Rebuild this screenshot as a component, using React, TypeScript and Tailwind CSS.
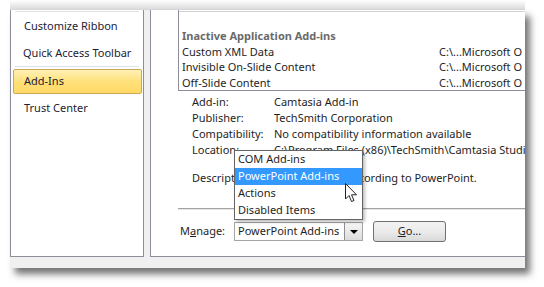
import React from "react";

const font = "font-['Noto_Sans',sans-serif]";

function Cursor() {
  return (
    <svg width="13" height="20" viewBox="0 0 13 20" className="absolute left-[345px] top-[183px]">
      <path d="M0.5 0.5 L0.5 16 L4 12.5 L6.5 18.5 L9 17.5 L6.5 11.8 L11.5 11.8 Z" fill="white" stroke="#222" strokeWidth="1" strokeLinejoin="miter" />
    </svg>
  );
}

export default function App() {
  return (
    <div className={`w-[544px] h-[287px] bg-white relative overflow-hidden text-[11px] text-[#1e1e1e] ${font}`}>
      <div className="ml-[10px] w-[515px] h-[10px] bg-gradient-to-b from-white to-[#d9d9d9]" />
      <div className="ml-[10px] w-[515px] h-[258px] bg-[#f0f0f0] shadow-[5px_6px_7px_rgba(0,0,0,0.55)] flex flex-col overflow-hidden">
        <div className="flex h-[247px] gap-[6px]">
          {/* left nav */}
          <div className="w-[134px] shrink-0 bg-white border-l border-r border-b border-[#8c8e9a] flex flex-col text-[#231c33]">
            <div className="mt-[1px] mx-[4px] h-px bg-[#dfe2e7]" />
            <div className="h-[28px] flex items-center pl-[13px]">Customize Ribbon</div>
            <div className="h-[26px] flex items-center pl-[12px]">Quick Access Toolbar</div>
            <div className="mx-[4px] h-px bg-[#dfe2e7]" />
            <div className="mt-[2px] ml-[2px] w-[129px] h-[25px] rounded-[2px] border border-[#c9a955] bg-gradient-to-b from-[#fff0b5] via-[#ffe17a] to-[#ffd966] flex items-center pl-[10px]">Add-Ins</div>
            <div className="h-[28px] flex items-center pl-[13px]">Trust Center</div>
          </div>
          {/* right */}
          <div className="flex-1 bg-white border-l border-b border-[#8c8e9a] flex flex-col overflow-hidden">
            <div className="ml-[27px] h-[81px] border-l border-b border-[#8c8e9a] flex flex-col overflow-hidden">
              <div className="mt-px h-px bg-[#d4d4d4]" />
              <div className="pt-[16px] pl-[3px] leading-[15.5px]">
                <div className="font-bold text-[#6a6a6a] h-[15.5px]">Inactive Application Add-ins</div>
                {["Custom XML Data", "Invisible On-Slide Content", "Off-Slide Content"].map((t) => (
                  <div key={t} className="flex h-[15.5px] whitespace-nowrap">
                    <div className="w-[257px] shrink-0">{t}</div>
                    <div>C:\...Microsoft O</div>
                  </div>
                ))}
              </div>
            </div>
            <div className="mt-[3px] pl-[41px] flex flex-col whitespace-nowrap">
              {[
                ["Add-in:", "Camtasia Add-in"],
                ["Publisher:", "TechSmith Corporation"],
                ["Compatibility:", "No compatibility information available"],
                ["Location:", "C:\\Program Files (x86)\\TechSmith\\Camtasia Studio"],
              ].map(([a, b]) => (
                <div key={a} className="flex h-[16px] items-center">
                  <div className="w-[82px] shrink-0">{a}</div>
                  <div>{b}</div>
                </div>
              ))}
              <div className="mt-[12px] flex h-[16px] items-center">
                <div className="w-[82px] shrink-0">Description:</div>
                <div>Add Camtasia recording to PowerPoint.</div>
              </div>
            </div>
            <div className="mt-[22px] ml-[27px] h-px bg-[#a3a3a3]" />
            <div className="ml-[27px] h-px bg-[#e6e6e6]" />
            <div className="mt-[11px] h-[21px] flex items-center pl-[29px]">
              <div className="w-[54px]">M<span className="underline">a</span>nage:</div>
              <div className="w-[129px] h-[19px] border border-[#a5a5a5] flex items-center">
                <div className="flex-1 pl-[3px] whitespace-nowrap">PowerPoint Add-ins</div>
                <div className="w-[18px] h-[17px] border-l border-[#8f8f8f] bg-gradient-to-b from-[#f6f6f6] to-[#dcdcdc] flex items-center justify-center">
                  <div className="w-0 h-0 border-l-[4px] border-r-[4px] border-t-[4px] border-l-transparent border-r-transparent border-t-black" />
                </div>
              </div>
              <div className="ml-[10px] w-[73px] h-[21px] rounded-[3px] border border-[#707070] bg-gradient-to-b from-[#f2f2f2] via-[#ebebeb] to-[#d9d9d9] flex items-center justify-center">
                <span><span className="underline">G</span>o...</span>
              </div>
            </div>
          </div>
        </div>
      </div>
      {/* dropdown */}
      <div className="absolute left-[234px] top-[150px] w-[129px] border border-[#646464] bg-white shadow-[2px_2px_3px_rgba(0,0,0,0.25)] flex flex-col">
        <div className="h-[17px] flex items-center pl-[3px]">COM Add-ins</div>
        <div className="h-[17px] flex items-center pl-[3px] bg-[#3399ff] text-white">PowerPoint Add-ins</div>
        <div className="h-[17px] flex items-center pl-[3px]">Actions</div>
        <div className="h-[17px] flex items-center pl-[3px]">Disabled Items</div>
      </div>
      <Cursor />
    </div>
  );
}
